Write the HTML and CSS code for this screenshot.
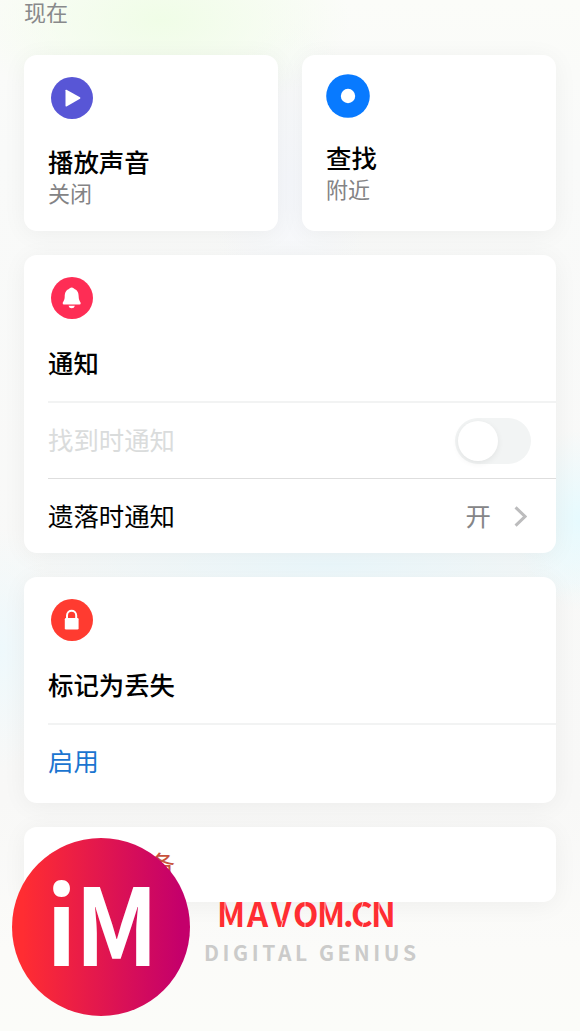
FILE: index.html
```html
<!DOCTYPE html>
<html lang="zh-CN">
<head>
<meta charset="utf-8">
<title>查找</title>
<link rel="stylesheet" href="styles.css">
</head>
<body>
<main class="screen">
  <h2 class="section-label">现在</h2>
  <div class="tiles">
    <section class="card tile">
      <svg class="icon" viewBox="0 0 42 42"><circle cx="21" cy="21" r="21" fill="#5856d6"/><path d="M14.5 13.3Q14.5 12.4 15.5 12.8L29 20.2Q29.9 21 29 21.8L15.5 29.4Q14.5 29.8 14.5 28.8Z" fill="#fff"/></svg>
      <h3 class="title">播放声音</h3>
      <p class="subtitle">关闭</p>
    </section>
    <section class="card tile tile-find">
      <svg class="icon icon-find" viewBox="0 0 44 44"><circle cx="22" cy="22" r="21.8" fill="#087aff"/><circle cx="22" cy="22" r="7.2" fill="#fff"/></svg>
      <h3 class="title">查找</h3>
      <p class="subtitle">附近</p>
    </section>
  </div>
  <section class="card notify">
    <header class="card-head">
      <svg class="icon" viewBox="0 0 42 42"><circle cx="21" cy="21" r="21" fill="#fe2d55"/><path d="M20.7 10.5C19 10.5 18.4 11.8 17.5 12.3C14.4 13.8 13.8 16.5 13.7 19.8C13.6 23.4 12.3 24.3 11.7 26Q11.5 27.5 13 27.5H28.4Q29.9 27.5 29.7 26C29.1 24.3 27.8 23.4 27.7 19.8C27.6 16.5 27 13.8 23.9 12.3C23 11.8 22.4 10.5 20.7 10.5ZM17.5 28.8H23.9Q23.2 31.3 20.7 31.3Q18.2 31.3 17.5 28.8Z" fill="#fff"/></svg>
      <h3 class="title">通知</h3>
    </header>
    <div class="row row-disabled">
      <span class="row-label">找到时通知</span>
      <span class="switch"><span class="knob"></span></span>
    </div>
    <div class="row row-last">
      <span class="row-label">遗落时通知</span>
      <span class="row-value">开</span>
      <svg class="chevron" viewBox="0 0 12 20"><path d="M1.3 1.3L10.3 10L1.3 18.7" fill="none" stroke="#bcbcbd" stroke-width="2.9"/></svg>
    </div>
  </section>
  <section class="card lost">
    <header class="card-head">
      <svg class="icon" viewBox="0 0 42 42"><circle cx="21" cy="21" r="21" fill="#ff3b30"/><path d="M16 19.5V16.5C16 10.2 25.2 10.2 25.2 16.5V19.5" fill="none" stroke="#fff" stroke-width="2"/><rect x="13.8" y="19" width="13.8" height="11.5" rx="1.2" fill="#fff"/></svg>
      <h3 class="title">标记为丢失</h3>
    </header>
    <div class="row row-action"><a class="row-label action">启用</a></div>
  </section>
  <section class="card remove"><span class="row-label danger">移除此设备</span></section>
  <svg class="brand" viewBox="0 0 420 190">
    <defs><linearGradient id="brand-fill"><stop offset=".06" stop-color="#ff2d32"/><stop offset=".95" stop-color="#c4006b"/></linearGradient></defs>
    <circle cx="101" cy="97" r="89" fill="url(#brand-fill)"/>
    <text class="brand-mark" transform="translate(46.5 136) scale(.93 1)">i</text>
    <text class="brand-mark" transform="translate(75 136) scale(.92 1)">M</text>
    <text class="brand-name" x="217 247 271 293 317 343 351 371" y="97">MAVOM.CN</text>
    <path class="brand-cuts" d="M225 72V98M325 72V98M237 84L231 97M337 84L331 97M252 91L261 93M281 98L283 90M305 72V80M305 90V98M363 72L361 79M362 98L364 90M379 72V98"/>
    <text class="brand-tag" x="204" y="131" textLength="212">DIGITAL GENIUS</text>
  </svg>
</main>
</body>
</html>
```
FILE: styles.css
```css
* { box-sizing: border-box; }
html, body { margin: 0; }
body { font-family: "Noto Sans CJK SC", sans-serif; color: #000; }
h2, h3, p { margin: 0; font-weight: 400; }
.screen {
  position: relative; width: 580px; height: 1031px; overflow: hidden;
  padding: 0 24px; display: flex; flex-direction: column;
  background:
    radial-gradient(ellipse 190px 100px at 160px 20px, #f0fde7, rgba(240, 253, 231, 0)),
    radial-gradient(ellipse 60px 120px at 0 650px, #eef9fc, rgba(238, 249, 252, 0)),
    radial-gradient(ellipse 70px 90px at 580px 520px, #e6fafe, rgba(230, 250, 254, 0)),
    radial-gradient(ellipse 330px 45px at 330px 565px, #ebf8fc, rgba(235, 248, 252, 0)),
    radial-gradient(ellipse 80px 160px at 290px 180px, #f5f7fb, rgba(245, 247, 251, 0)),
    linear-gradient(#fbfcf9 0, #f9faf9 150px, #f8f8f7 800px, #fbfbf9 950px, #fbfcf9);
}
.section-label { height: 55px; font-size: 22px; line-height: 32px; color: #88898b; }
.section-label { margin-top: -5px; height: 60px; }
.tiles { display: grid; grid-template-columns: 1fr 1fr; gap: 24px; margin-bottom: 24px; }
.card { background: #fff; border-radius: 13px; box-shadow: 0 3px 24px rgba(0, 0, 0, .05); }
.tile { height: 176px; padding: 22px 24px 0; }
.tile-find { padding-top: 19px; }
.icon { display: block; width: 42px; height: 42px; margin-left: 3px; }
.icon-find { width: 44px; height: 44px; margin-left: 0; }
.title { margin-top: 26px; font-size: 25.4px; line-height: 32px; font-weight: 500; }
.tile-find .title { margin-top: 23px; }
.subtitle { font-size: 22px; line-height: 30px; color: #838385; }
.card-head { height: 146px; padding: 22px 24px 0; }
.card-head .title { margin-top: 27px; }
.notify { height: 298px; margin-bottom: 24px; }
.lost { height: 226px; margin-bottom: 24px; }
.row { display: flex; align-items: center; height: 77px; margin-left: 24px; padding-right: 25px; border-top: 2px solid #f2f3f3; font-size: 25.4px; }
.row-last { height: 75px; border-top: 1px solid #dedede; padding-right: 29px; }
.row-label { padding-bottom: 3px; font-size: 25.4px; line-height: 36px; }
.row-action .row-label { padding-bottom: 5px; }
.row-disabled { color: #dadcdc; }
.switch { width: 76px; height: 46px; margin-left: auto; padding: 3px; border-radius: 23px; background: #f2f4f4; }
.knob { display: block; width: 40px; height: 40px; border-radius: 50%; background: #fff; box-shadow: 0 2px 6px rgba(0, 0, 0, .07); }
.row-value { margin-left: auto; margin-right: 23px; padding-bottom: 2px; color: #858587; }
.chevron { width: 13px; height: 21px; }
.action { color: #1b75d0; }
.remove { height: 75px; padding: 18px 24px; }
.danger { color: #c8523c; }
.brand { position: absolute; left: 0; top: 830px; width: 420px; height: 190px; }
.brand-mark { font-size: 106px; font-weight: 700; fill: #fff; }
.brand-name { font-size: 33px; font-weight: 700; fill: #ff2d32; }
.brand-cuts { fill: none; stroke: #fafaf9; stroke-width: 1; opacity: .75; }
.brand-tag { font-size: 21px; font-weight: 700; fill: #cbcbca; }
```
